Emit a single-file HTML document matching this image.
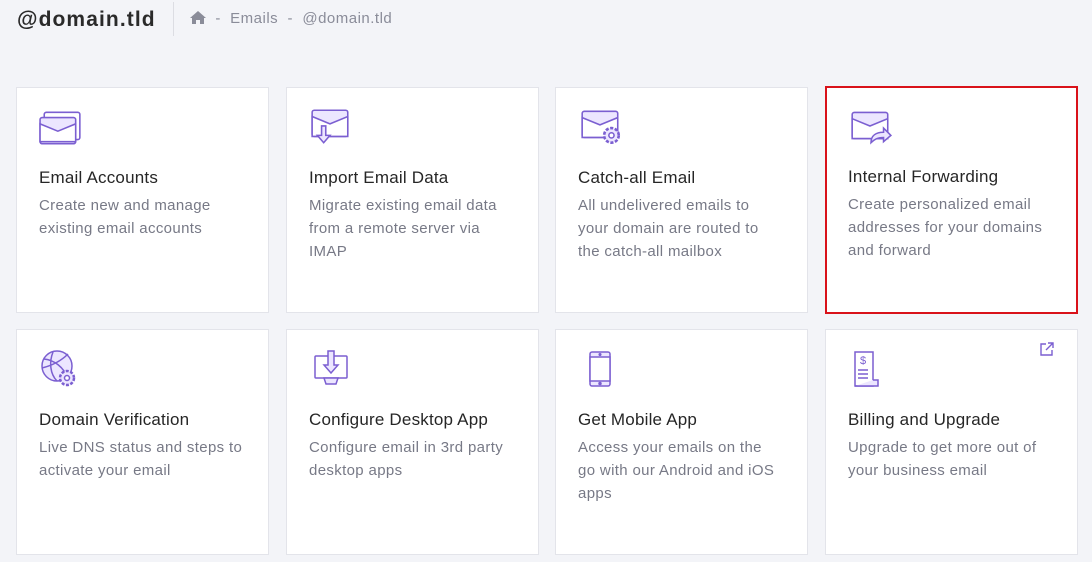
<!DOCTYPE html>
<html><head><meta charset="utf-8"><style>
*{box-sizing:border-box;margin:0;padding:0}
body{width:1092px;height:562px;background:#f3f4f8;font-family:"Liberation Sans",sans-serif;position:relative;overflow:hidden}
.h{position:absolute;left:17px;top:8px;font-size:21px;font-weight:bold;color:#2a2a2a;letter-spacing:1.1px}
.sep{position:absolute;left:173px;top:2px;width:1px;height:34px;background:#dcdde3}
.bc{position:absolute;left:190px;top:10px;font-size:15px;color:#8a8c99;letter-spacing:0.5px}
.card{position:absolute;width:253px;height:226px;background:#fff;border:1px solid #e3e4ea}
.card svg.i{position:absolute;left:22px;top:20px}
.t{position:absolute;left:22px;top:80px;font-size:17px;color:#262626;letter-spacing:0.2px}
.d{position:absolute;left:22px;top:106px;width:206px;font-size:15px;line-height:23px;color:#777986;letter-spacing:0.35px}
.sel{border:2px solid #d9121a}
.sel svg.i{left:21px;top:19px}.sel .t{left:21px;top:79px}.sel .d{left:21px;top:105px}
</style></head><body>
<div class="h">@domain.tld</div><div class="sep"></div>
<div class="bc"><svg width="16" height="13" viewBox="0 0 16 13" style="vertical-align:-1px"><path d="M8 0L0 7h2v6h4V9h4v4h4V7h2z" fill="#8a8c99"/></svg> &nbsp;-&nbsp; Emails &nbsp;-&nbsp; @domain.tld</div>

<div class="card" style="left:16px;top:87px"><svg class="i" width="44" height="38" viewBox="0 0 42 36" fill="none" stroke="#7b5fd1" stroke-width="1.5"><rect x="5" y="4" width="34" height="26" rx="2" fill="#fff"/><rect x="1" y="9" width="34" height="25" rx="2" fill="#ece6ff"/><path d="M1 15l17 7 17-7v17H1z" fill="#fff"/></svg><div class="t">Email Accounts</div><div class="d">Create new and manage existing email accounts</div></div>

<div class="card" style="left:286px;top:87px"><svg class="i" width="44" height="38" viewBox="0 0 42 36" fill="none" stroke="#7b5fd1" stroke-width="1.5"><rect x="3" y="2" width="34" height="25" rx="2" fill="#ece6ff"/><path d="M3 8l17 7 17-7v19H3z" fill="#fff"/><path d="M12 17v9h-4l6 7 6-7h-4v-9z" fill="#ece6ff"/></svg><div class="t">Import Email Data</div><div class="d">Migrate existing email data from a remote server via IMAP</div></div>

<div class="card" style="left:555px;top:87px"><svg class="i" width="46" height="38" viewBox="0 0 44 36" fill="none" stroke="#7b5fd1" stroke-width="1.5"><rect x="4" y="3" width="34" height="25" rx="2" fill="#ece6ff"/><path d="M4 9l17 7 17-7v19H4z" fill="#fff"/><circle cx="32" cy="26" r="7" fill="#ece6ff" stroke-dasharray="3 1.5" stroke-width="2.5"/><circle cx="32" cy="26" r="2.5" fill="#fff"/></svg><div class="t">Catch-all Email</div><div class="d">All undelivered emails to your domain are routed to the catch-all mailbox</div></div>

<div class="card sel" style="left:825px;top:86px;height:228px"><svg class="i" width="46" height="38" viewBox="0 0 44 36" fill="none" stroke="#7b5fd1" stroke-width="1.5"><rect x="4" y="5" width="34" height="25" rx="2" fill="#ece6ff"/><path d="M4 11l17 7 17-7v19H4z" fill="#fff"/><path d="M22 34c0-7 5-10 12-10v-4l7 7-7 6v-4c-6 0-9 2-12 5z" fill="#ece6ff"/></svg><div class="t">Internal Forwarding</div><div class="d">Create personalized email addresses for your domains and forward</div></div>

<div class="card" style="left:16px;top:329px"><svg class="i" width="44" height="40" viewBox="0 0 44 40" fill="none" stroke="#7b5fd1" stroke-width="1.5"><circle cx="18" cy="16" r="15" fill="#ece6ff"/><path d="M5 9c10 1 20 8 24 20M14 2c-4 10-3 22 4 29M3 18c8-2 18-6 26-14"/><circle cx="28" cy="28" r="7" fill="#ece6ff" stroke-dasharray="3 1.5" stroke-width="2.5"/><circle cx="28" cy="28" r="2.5" fill="#fff"/></svg><div class="t">Domain Verification</div><div class="d">Live DNS status and steps to activate your email</div></div>

<div class="card" style="left:286px;top:329px"><svg class="i" width="42" height="40" viewBox="0 0 42 40" fill="none" stroke="#7b5fd1" stroke-width="1.5"><rect x="6" y="6" width="32" height="22" rx="1" fill="#fff"/><path d="M15 28h14l-2 6H17z" fill="#ece6ff"/><path d="M19 1v14h-4l7 8 7-8h-4V1z" fill="#ece6ff"/></svg><div class="t">Configure Desktop App</div><div class="d">Configure email in 3rd party desktop apps</div></div>

<div class="card" style="left:555px;top:329px"><svg class="i" width="42" height="40" viewBox="0 0 42 40" fill="none" stroke="#7b5fd1" stroke-width="1.5"><rect x="12" y="2" width="20" height="34" rx="2" fill="#ece6ff"/><rect x="12" y="7" width="20" height="24" fill="#fff"/><circle cx="22" cy="4.5" r=".8" fill="#7b5fd1"/><circle cx="22" cy="33.5" r="1" fill="#7b5fd1"/></svg><div class="t">Get Mobile App</div><div class="d" style="width:201px">Access your emails on the go with our Android and iOS apps</div></div>

<div class="card" style="left:825px;top:329px"><svg class="i" width="42" height="40" viewBox="0 0 42 40" fill="none" stroke="#7b5fd1" stroke-width="1.5"><path d="M7 2h18v34H7z" fill="#fff"/><path d="M25 30h5v6H7" fill="#ece6ff"/><text x="12" y="14" font-size="11" fill="#7b5fd1" stroke="none" font-family="Liberation Sans">$</text><path d="M10 20h10M10 24h10M10 28h10"/></svg>
<svg style="position:absolute;right:23px;top:12px" width="14" height="14" viewBox="0 0 14 14" fill="none" stroke="#7b5fd1" stroke-width="1.4"><path d="M6 2H1v11h11V8M8 1h5v5M13 1L6 8"/></svg>
<div class="t">Billing and Upgrade</div><div class="d">Upgrade to get more out of your business email</div></div>
</body></html>
